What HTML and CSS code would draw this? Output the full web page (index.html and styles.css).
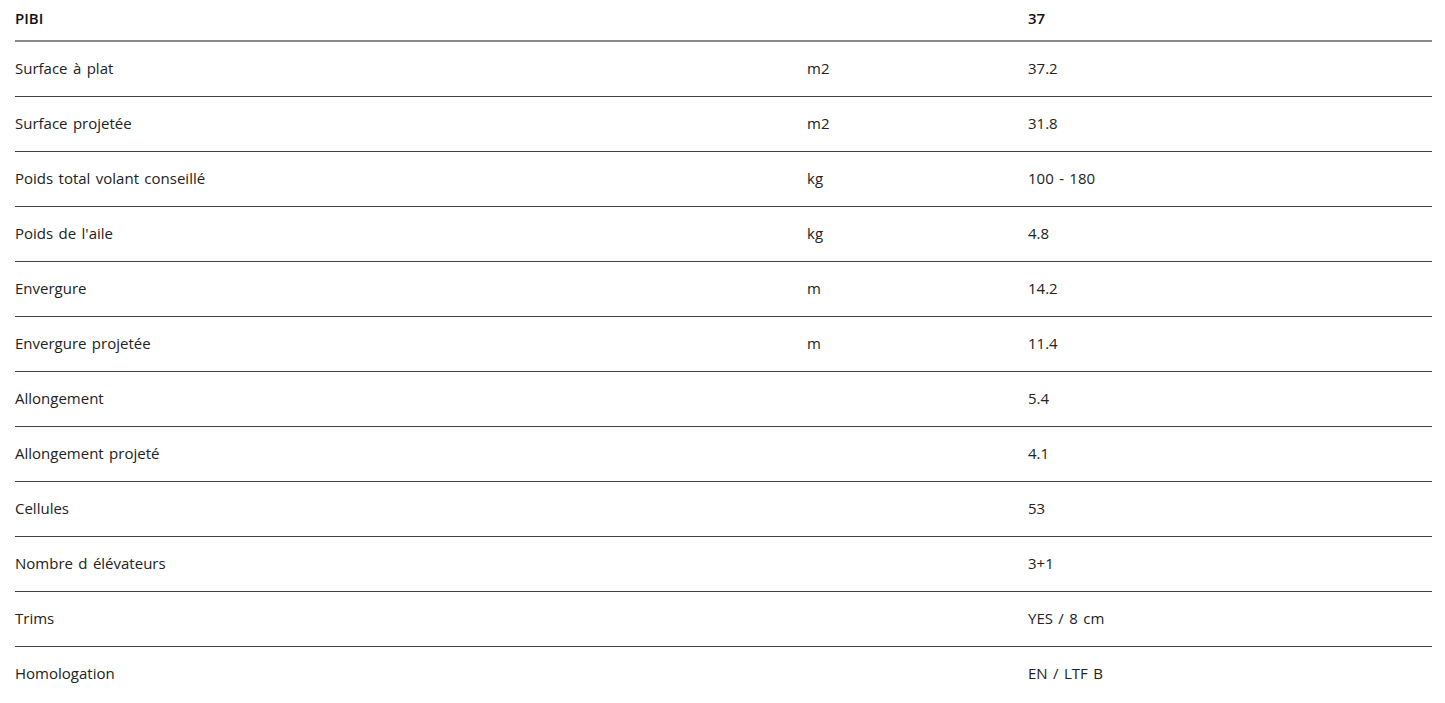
FILE: index.html
```html
<!DOCTYPE html>
<html lang="fr">
<head>
<meta charset="utf-8">
<title>PIBI</title>
<link rel="stylesheet" href="styles.css">
</head>
<body>
<table class="specs">
  <thead>
    <tr class="head-row">
      <th class="c-label">PIBI</th>
      <th class="c-unit"></th>
      <th class="c-value">37</th>
    </tr>
  </thead>
  <tbody>
    <tr><td class="c-label">Surface à plat</td><td class="c-unit">m2</td><td class="c-value">37.2</td></tr>
    <tr><td class="c-label">Surface projetée</td><td class="c-unit">m2</td><td class="c-value">31.8</td></tr>
    <tr><td class="c-label">Poids total volant conseillé</td><td class="c-unit">kg</td><td class="c-value">100 - 180</td></tr>
    <tr><td class="c-label">Poids de l'aile</td><td class="c-unit">kg</td><td class="c-value">4.8</td></tr>
    <tr><td class="c-label">Envergure</td><td class="c-unit">m</td><td class="c-value">14.2</td></tr>
    <tr><td class="c-label">Envergure projetée</td><td class="c-unit">m</td><td class="c-value">11.4</td></tr>
    <tr><td class="c-label">Allongement</td><td class="c-unit"></td><td class="c-value">5.4</td></tr>
    <tr><td class="c-label">Allongement projeté</td><td class="c-unit"></td><td class="c-value">4.1</td></tr>
    <tr><td class="c-label">Cellules</td><td class="c-unit"></td><td class="c-value">53</td></tr>
    <tr><td class="c-label">Nombre d élévateurs</td><td class="c-unit"></td><td class="c-value">3+1</td></tr>
    <tr><td class="c-label">Trims</td><td class="c-unit"></td><td class="c-value">YES / 8 cm</td></tr>
    <tr class="last"><td class="c-label">Homologation</td><td class="c-unit"></td><td class="c-value">EN / LTF B</td></tr>
  </tbody>
</table>
</body>
</html>
```
FILE: styles.css
```css
html, body {
  margin: 0;
  padding: 0;
  background: #fff;
}
body {
  padding: 0 13px 0 15px;
  font-family: "Open Sans", "Noto Sans", sans-serif;
  font-size: 15px;
  word-spacing: 1.5px;
  color: #222;
}
.specs {
  width: 100%;
  border-collapse: collapse;
  table-layout: fixed;
}
.specs th, .specs td {
  padding: 0;
  text-align: left;
  vertical-align: middle;
  white-space: nowrap;
}
.c-label { width: 792px; }
.c-unit { width: 221px; }
.head-row th {
  height: 36px;
  padding-bottom: 4px;
  font-weight: 600;
  color: #111;
  border-bottom: 2px solid #8a8a8a;
}
.specs tbody td {
  height: 52px;
  padding-bottom: 2px;
  border-bottom: 1px solid #444;
}
.specs tbody tr.last td {
  border-bottom: none;
}
```
